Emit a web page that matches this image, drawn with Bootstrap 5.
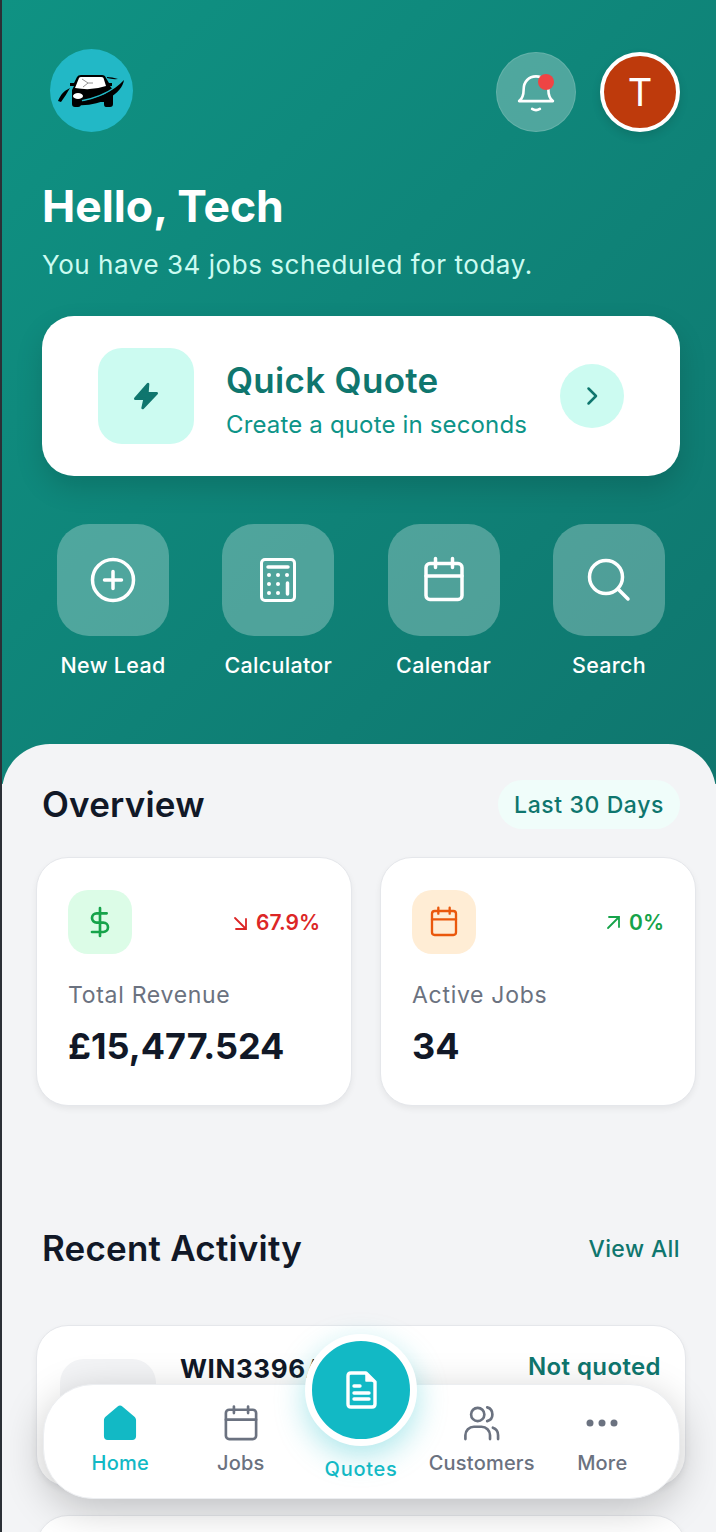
<!DOCTYPE html>
<html>
<head>
    <meta charset="UTF-8">
    <title>Home</title>
    <link href="https://cdn.jsdelivr.net/npm/bootstrap@5.3.5/dist/css/bootstrap.min.css" rel="stylesheet">
    <style>
        html, body { height: 100%; }
        body {
            font-family: Inter, "Liberation Sans", sans-serif;
            background: #f3f4f6;
            overflow: hidden;
        }
        .app-shell {
            position: relative;
            height: 1532px;
            overflow: hidden;
            border-left: 2px solid #2b3036;
        }
        .hero {
            padding: 49px 36px 106px 40px;
            background: linear-gradient(135deg, #0f9283 0%, #0f766e 100%);
            color: #fff;
        }
        .logo-disc { width: 83px; height: 83px; margin-left: 8px; border-radius: 50%; background: #22b8c6; }
        .bell-btn {
            position: relative;
            width: 80px;
            height: 80px;
            border-radius: 50%;
            background: rgba(255, 255, 255, .27);
            border: 1px solid rgba(255, 255, 255, .12);
        }
        .bell-dot {
            position: absolute;
            top: 21px;
            left: 41px;
            width: 16px;
            height: 16px;
            border-radius: 50%;
            background: #ef4444;
        }
        .avatar-disc {
            width: 80px;
            height: 80px;
            border-radius: 50%;
            background: #be3a0c;
            border: 4px solid #fff;
            font-size: 38px;
            box-shadow: 0 4px 10px rgba(0, 0, 0, .12);
        }
        .hello { margin: 48px 0 0; font-size: 44.5px; line-height: 53px; font-weight: 700; }
        .hello-sub { margin: 16px 0 0; font-size: 26px; line-height: 32px; letter-spacing: .54px; color: #ccfbf1; }
        .quick-card {
            height: 160px;
            margin-top: 35px;
            padding: 0 56px;
            border-radius: 32px;
            background: #fff;
            box-shadow: 0 12px 28px rgba(0, 0, 0, .14);
        }
        .quick-icon { width: 96px; height: 96px; border-radius: 24px; background: #ccfbf1; }
        .quick-text { margin-left: 32px; padding-top: 7px; }
        .quick-title { font-size: 35px; line-height: 41px; font-weight: 600; letter-spacing: .3px; color: #0f766e; }
        .quick-sub { margin-top: 9px; font-size: 24px; line-height: 30px; letter-spacing: .16px; color: #0d9488; }
        .quick-go { width: 64px; height: 64px; border-radius: 50%; background: #ccfbf1; }
        .action-row { margin-top: 48px; padding: 0 15px; }
        .action-item { width: 112px; }
        .action-tile { width: 112px; height: 112px; border-radius: 32px; background: rgba(255, 255, 255, .27); }
        .action-name { margin-top: 16px; font-size: 21.5px; line-height: 26px; font-weight: 500; letter-spacing: .3px; white-space: nowrap; }
        .sheet {
            position: relative;
            margin-top: -40px;
            padding: 36px 20px 0 34px;
            border-radius: 48px 48px 0 0;
            background: #f3f4f6;
        }
        .head-row { padding: 0 16px 0 6px; }
        .head-title { margin: 0; font-size: 35px; line-height: 41px; font-weight: 600; letter-spacing: .2px; color: #111827; }
        .range-pill {
            height: 49px;
            padding: 1px 16px 0;
            border-radius: 25px;
            background: #f0fdfa;
            color: #0f766e;
            font-size: 23px;
            font-weight: 500;
            letter-spacing: .6px;
        }
        .stat-row { margin-top: 28px; gap: 28px; }
        .stat-card {
            width: 316px;
            height: 249px;
            padding: 32px 31px;
            border: 1px solid #e5e7eb;
            border-radius: 32px;
            background: #fff;
            box-shadow: 0 3px 6px rgba(0, 0, 0, .06);
        }
        .stat-icon { width: 64px; height: 64px; border-radius: 20px; }
        .stat-icon.tone-green { background: #dcfce7; }
        .stat-icon.tone-orange { background: #ffedd5; }
        .stat-change { padding-top: 2px; font-size: 21px; font-weight: 600; }
        .stat-change.is-down { color: #dc2626; }
        .stat-change.is-up { color: #16a34a; }
        .stat-label { margin-top: 27px; font-size: 23px; line-height: 28px; letter-spacing: .7px; color: #6b7280; }
        .stat-value { margin-top: 17px; font-size: 36px; line-height: 41px; font-weight: 700; color: #111827; }
        .recent-row { margin-top: 122px; }
        .view-all { padding-top: 2px; font-size: 23px; font-weight: 500; letter-spacing: .4px; color: #0f766e; text-decoration: none; }
        .activity-card {
            width: 650px;
            height: 162px;
            margin-top: 56px;
            padding: 33px 24px 33px 23px;
            border: 1px solid #e5e7eb;
            border-radius: 32px;
            background: #fff;
            box-shadow: 0 3px 6px rgba(0, 0, 0, .06);
        }
        .activity-card + .activity-card { margin-top: 28px; }
        .activity-thumb { width: 96px; height: 96px; border-radius: 24px; background: #f3f4f6; }
        .activity-name { margin-top: -6px; font-size: 26px; line-height: 32px; font-weight: 700; color: #111827; letter-spacing: .6px; white-space: nowrap; }
        .activity-state { margin-top: -8px; font-size: 24px; line-height: 32px; font-weight: 600; letter-spacing: .4px; color: #0f766e; white-space: nowrap; }
        .tab-bar {
            position: absolute;
            left: 41px;
            top: 1384px;
            width: 637px;
            height: 115px;
            padding: 0 16px;
            border: 1px solid #eceef1;
            border-radius: 50px;
            background: #fff;
            box-shadow: 0 10px 40px rgba(0, 0, 0, .22);
        }
        .tab-item { width: 120.5px; padding-top: 16px; color: #6b7280; font-size: 20px; line-height: 26px; font-weight: 500; letter-spacing: .2px; white-space: nowrap; }
        .tab-item.is-on { color: #12b9c5; }
        .tab-icon { height: 44px; margin-bottom: 5px; }
        .quote-fab {
            position: absolute;
            left: 261px;
            top: -51px;
            width: 112px;
            height: 112px;
            border: 7px solid #fff;
            border-radius: 50%;
            background: #12b9c5;
            box-shadow: 0 10px 30px rgba(18, 185, 197, .35);
        }
        .quote-name {
            position: absolute;
            left: 261px;
            top: 71px;
            width: 112px;
            color: #12b9c5;
            font-size: 20px;
            line-height: 26px;
            font-weight: 500;
            letter-spacing: .7px;
        }
    </style>
</head>
<body>
<div class="app-shell">
    <header class="hero">
        <div class="d-flex justify-content-between align-items-end">
            <div class="logo-disc d-flex align-items-center justify-content-center">
                <svg width="80" height="46" viewBox="0 0 80 46">
                    <path fill="#000" d="M22 15L25 9Q26 7 29 7H50Q53 7 54 10L57 15H60V18H58L61 22V36Q61 39 58 39H54Q52 39 52 36V34H29V36Q29 39 26 39H23Q20 39 20 36V22L22 18H18V15z"/>
                    <path fill="#fff" d="M23 20L27 10Q27.500 9 29 9H49Q51 9 51.500 10L54 18Q40 23 23 20z"/>
                    <path fill="none" stroke="#777" stroke-width=".8" d="M30 11L36 15L31 19M36 15H41"/>
                    <ellipse cx="26" cy="28" rx="5" ry="3" fill="#fff"/>
                    <path fill="none" stroke="#22b8c6" stroke-width="2" d="M30 33Q50 29 64 19"/>
                    <path fill="#000" d="M25 34C45 32 62 23 72 12C70 27 46 39 25 37zM6 33C9 26 12 23 18 20C15 25 12 30 9 34zM55 9Q60 9 66 11Q60 11.500 55 10z"/>
                </svg>
            </div>
            <div class="d-flex gap-4">
                <div class="bell-btn d-flex align-items-center justify-content-center">
                    <svg width="52" height="52" viewBox="0 0 40 40" fill="none" stroke="#fff" stroke-width="2" stroke-linecap="round" stroke-linejoin="round">
                        <path d="M7 27c2.500-2 3.500-4 3.500-9 0-6 4-10 9.500-10s9.500 4 9.500 10c0 5 1 7 3.500 9z"/>
                        <path d="M17 33c2 1.300 4 1.300 6 0"/>
                    </svg>
                    <span class="bell-dot"></span>
                </div>
                <div class="avatar-disc d-flex align-items-center justify-content-center">T</div>
            </div>
        </div>

        <h1 class="hello">Hello, Tech</h1>
        <p class="hello-sub">You have 34 jobs scheduled for today.</p>

        <div class="quick-card d-flex align-items-center">
            <div class="quick-icon d-flex align-items-center justify-content-center flex-shrink-0">
                <svg width="32" height="32" viewBox="0 0 24 24" fill="#0f766e" stroke="#0f766e" stroke-width="2" stroke-linejoin="round">
                    <path d="M13.500 3L4 14h7l-1.500 7L20 10h-7z"/>
                </svg>
            </div>
            <div class="quick-text flex-grow-1">
                <div class="quick-title">Quick Quote</div>
                <div class="quick-sub">Create a quote in seconds</div>
            </div>
            <div class="quick-go d-flex align-items-center justify-content-center flex-shrink-0">
                <svg width="24" height="24" viewBox="0 0 24 24" fill="none" stroke="#0f766e" stroke-width="2.500" stroke-linecap="round" stroke-linejoin="round">
                    <path d="M8.500 4.500l7.500 7.500-7.500 7.500"/>
                </svg>
            </div>
        </div>

        <div class="action-row d-flex justify-content-between">
            <div class="action-item d-flex flex-column align-items-center">
                <div class="action-tile d-flex align-items-center justify-content-center">
                    <svg width="48" height="48" viewBox="0 0 48 48" fill="none" stroke="#fff" stroke-width="3.500" stroke-linecap="round" stroke-linejoin="round">
                        <circle cx="24" cy="24" r="20.500"/><path d="M24 15.500v17M15.500 24h17"/>
                    </svg>
                </div>
                <div class="action-name">New Lead</div>
            </div>
            <div class="action-item d-flex flex-column align-items-center">
                <div class="action-tile d-flex align-items-center justify-content-center">
                    <svg width="48" height="48" viewBox="0 0 48 48" fill="none" stroke="#fff" stroke-width="3" stroke-linecap="round" stroke-linejoin="round">
                        <rect x="7.500" y="3.500" width="33" height="41" rx="3.500"/>
                        <path d="M14 11h20" stroke-width="3.500"/>
                        <path d="M33.500 27v11" stroke-width="3.500"/>
                        <g fill="#fff" stroke="none"><circle cx="15" cy="19" r="2"/><circle cx="24" cy="19" r="2"/><circle cx="33" cy="19" r="2"/><circle cx="15" cy="28" r="2"/><circle cx="24" cy="28" r="2"/><circle cx="15" cy="37" r="2"/><circle cx="24" cy="37" r="2"/></g>
                    </svg>
                </div>
                <div class="action-name">Calculator</div>
            </div>
            <div class="action-item d-flex flex-column align-items-center">
                <div class="action-tile d-flex align-items-center justify-content-center">
                    <svg width="48" height="48" viewBox="0 0 48 48" fill="none" stroke="#fff" stroke-width="3.500" stroke-linecap="round" stroke-linejoin="round">
                        <rect x="6" y="7.500" width="36" height="36" rx="4"/><path d="M6 20h36M15.500 2.500v9M32.500 2.500v9"/>
                    </svg>
                </div>
                <div class="action-name">Calendar</div>
            </div>
            <div class="action-item d-flex flex-column align-items-center">
                <div class="action-tile d-flex align-items-center justify-content-center">
                    <svg width="48" height="48" viewBox="0 0 48 48" fill="none" stroke="#fff" stroke-width="3.500" stroke-linecap="round" stroke-linejoin="round">
                        <circle cx="21" cy="21" r="16.500"/><path d="M33 33l10 10"/>
                    </svg>
                </div>
                <div class="action-name">Search</div>
            </div>
        </div>
    </header>

    <main class="sheet">
        <div class="head-row d-flex justify-content-between align-items-center">
            <h2 class="head-title">Overview</h2>
            <div class="range-pill d-flex align-items-center">Last 30 Days</div>
        </div>

        <div class="stat-row d-flex">
            <div class="stat-card">
                <div class="d-flex justify-content-between align-items-center">
                    <div class="stat-icon tone-green d-flex align-items-center justify-content-center">
                        <svg width="32" height="32" viewBox="0 0 24 24" fill="none" stroke="#16a34a" stroke-width="2" stroke-linecap="round" stroke-linejoin="round">
                            <path d="M12 1.500v21M17 5.500H9.500a3.500 3.500 0 0 0 0 7h5a3.500 3.500 0 0 1 0 7H6"/>
                        </svg>
                    </div>
                    <div class="stat-change is-down d-flex align-items-center gap-2">
                        <svg width="16" height="16" viewBox="0 0 16 16" fill="none" stroke="#dc2626" stroke-width="1.800" stroke-linecap="round"><path d="M3 3l10 10M14 4v10H4"/></svg>
                        <span>67.9%</span>
                    </div>
                </div>
                <div class="stat-label">Total Revenue</div>
                <div class="stat-value">£15,477.524</div>
            </div>
            <div class="stat-card">
                <div class="d-flex justify-content-between align-items-center">
                    <div class="stat-icon tone-orange d-flex align-items-center justify-content-center">
                        <svg width="32" height="32" viewBox="0 0 48 48" fill="none" stroke="#ea580c" stroke-width="3.500" stroke-linecap="round" stroke-linejoin="round">
                            <rect x="6" y="7.500" width="36" height="36" rx="4"/><path d="M6 20h36M15.500 2.500v9M32.500 2.500v9"/>
                        </svg>
                    </div>
                    <div class="stat-change is-up d-flex align-items-center gap-2">
                        <svg width="16" height="16" viewBox="0 0 16 16" fill="none" stroke="#16a34a" stroke-width="1.800" stroke-linecap="round"><path d="M3 13L13 3M4 2h10v10"/></svg>
                        <span>0%</span>
                    </div>
                </div>
                <div class="stat-label">Active Jobs</div>
                <div class="stat-value">34</div>
            </div>
        </div>

        <div class="head-row recent-row d-flex justify-content-between align-items-center">
            <h2 class="head-title">Recent Activity</h2>
            <a class="view-all" href="#">View All</a>
        </div>

        <div class="activity-card d-flex gap-4">
            <div class="activity-thumb flex-shrink-0"></div>
            <div class="activity-name flex-grow-1">WIN3396ABCDM</div>
            <div class="activity-state">Not quoted</div>
        </div>
        <div class="activity-card"></div>
    </main>

    <nav class="tab-bar d-flex">
        <div class="tab-item is-on d-flex flex-column align-items-center">
            <div class="tab-icon d-flex align-items-center">
                <svg width="34" height="36" viewBox="0 0 36 38"><path fill="#12b9c5" d="M15.500 1.500c1.500-1.300 3.500-1.300 5 0L33 12c1.300 1 2 2.300 2 4v17c0 2.500-1.500 4-4 4H5c-2.500 0-4-1.500-4-4V16c0-1.700.7-3 2-4z"/></svg>
            </div>
            <span>Home</span>
        </div>
        <div class="tab-item d-flex flex-column align-items-center">
            <div class="tab-icon d-flex align-items-center">
                <svg width="34" height="36" viewBox="0 0 36 38" fill="none" stroke="#6b7280" stroke-width="2.800" stroke-linecap="round" stroke-linejoin="round">
                    <rect x="2" y="5" width="32" height="31" rx="3.500"/><path d="M2 15.500h32M10.500 1.500v7M25.500 1.500v7"/>
                </svg>
            </div>
            <span>Jobs</span>
        </div>
        <div class="tab-item"></div>
        <div class="tab-item d-flex flex-column align-items-center">
            <div class="tab-icon d-flex align-items-center">
                <svg width="37" height="36" viewBox="0 0 38 38" fill="none" stroke="#6b7280" stroke-width="2.800" stroke-linecap="round" stroke-linejoin="round">
                    <circle cx="15" cy="10" r="7"/><path d="M2 36v-4c0-5 4-9 9-9h8c5 0 9 4 9 9v4M25 2.500c4 1 5.500 4 5.500 7.500s-1.500 6-5.500 7M31 24c3 1 5.500 3.500 5.500 8v4"/>
                </svg>
            </div>
            <span>Customers</span>
        </div>
        <div class="tab-item d-flex flex-column align-items-center">
            <div class="tab-icon d-flex align-items-center">
                <svg width="32" height="8" viewBox="0 0 32 8" fill="#6b7280"><circle cx="4" cy="4" r="3.500"/><circle cx="16" cy="4" r="3.500"/><circle cx="28" cy="4" r="3.500"/></svg>
            </div>
            <span>More</span>
        </div>
        <div class="quote-fab d-flex align-items-center justify-content-center">
            <svg width="31" height="38" viewBox="0 0 31 38" fill="none" stroke="#fff" stroke-width="3.400" stroke-linecap="round" stroke-linejoin="round">
                <path d="M5 2h15l9 9v22c0 2-1 3-3 3H5c-2 0-3-1-3-3V5c0-2 1-3 3-3z"/>
                <path d="M20 3v7h7" fill="#fff" stroke-width="1.500"/>
                <path d="M8 15h6M8 22h15M8 28h15"/>
            </svg>
        </div>
        <div class="quote-name text-center">Quotes</div>
    </nav>
</div>
</body>
</html>
